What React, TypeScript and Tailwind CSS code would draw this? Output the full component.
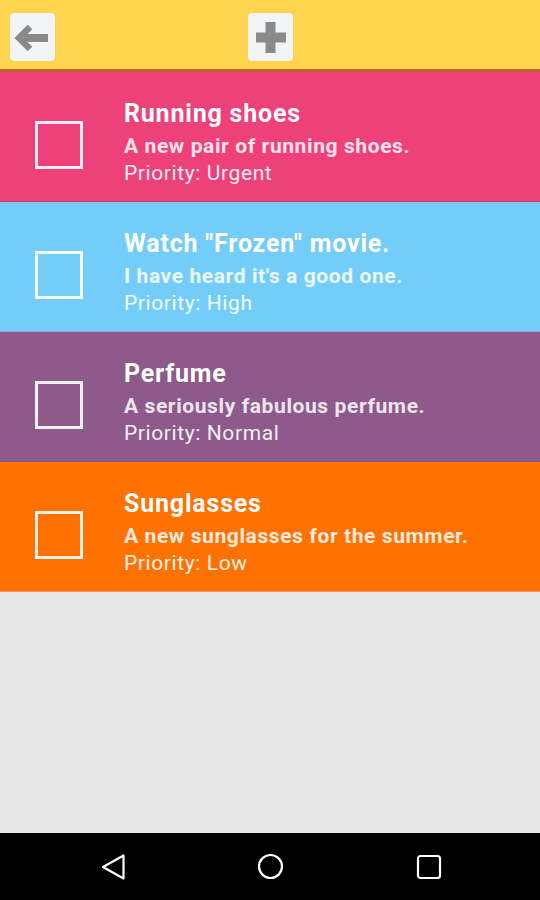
import React from 'react';

interface Task {
  id: number;
  title: string;
  description: string;
  priority: string;
  color: string;
  edge: string;
}

const tasks: Task[] = [
  {
    id: 1,
    title: 'Running shoes',
    description: 'A new pair of running shoes.',
    priority: 'Urgent',
    color: 'bg-[#ee4079]',
    edge: 'border-[#d8346a]',
  },
  {
    id: 2,
    title: 'Watch "Frozen" movie.',
    description: "I have heard it's a good one.",
    priority: 'High',
    color: 'bg-[#73cdf8]',
    edge: 'border-[#8fa6d6]',
  },
  {
    id: 3,
    title: 'Perfume',
    description: 'A seriously fabulous perfume.',
    priority: 'Normal',
    color: 'bg-[#8e5a8b]',
    edge: 'border-[#85557f]',
  },
  {
    id: 4,
    title: 'Sunglasses',
    description: 'A new sunglasses for the summer.',
    priority: 'Low',
    color: 'bg-[#ff7101]',
    edge: 'border-[#ff9460]',
  },
];

const App: React.FC = () => {
  return (
    <div className="flex flex-col w-[540px] h-[900px] bg-[#e8e8e8] font-['Roboto',sans-serif]">
      {/* toolbar */}
      <div className="h-[69px] bg-[#ffd54f] flex items-start shrink-0">
        <button className="mt-[13px] ml-[10px] w-[45px] h-[48px] rounded-[4px] bg-[#f3f4f6] flex items-center justify-center shadow-[0_0_1px_rgba(0,0,0,0.15)]">
          <svg viewBox="0 0 45 48" className="w-[45px] h-[48px]">
            <path d="M38 25H14" stroke="#8a8a8a" strokeWidth={8} fill="none" />
            <path d="M20 14L9 25l11 11" stroke="#8a8a8a" strokeWidth={6.5} strokeLinejoin="miter" fill="none" />
          </svg>
        </button>
        <button className="mt-[13px] ml-[193px] w-[45px] h-[48px] rounded-[4px] bg-[#f3f4f6] flex items-center justify-center shadow-[0_0_1px_rgba(0,0,0,0.15)]">
          <svg viewBox="0 0 45 48" className="w-[45px] h-[48px]">
            <path d="M17.5 9h10v10.5H38v10H27.5V40h-10V29.5H8v-10h9.5z" fill="#8a8a8a" />
          </svg>
        </button>
      </div>
      <div className="h-[3px] bg-[#c0642c] shrink-0" />

      {/* task list */}
      <div className="flex flex-col">
        {tasks.map((task) => (
          <div
            key={task.id}
            className={`h-[130px] flex items-start border-b ${task.color} ${task.edge}`}
          >
            <div className="mt-[49px] ml-[35px] w-[48px] h-[48px] border-[3px] border-white/90 shrink-0" />
            <div className="ml-[41px] pt-[28px] text-white">
              <div className="text-[25px] leading-[28px] font-bold tracking-[0.8px]">{task.title}</div>
              <div className="mt-[5px] text-[21px] leading-[27px] font-bold tracking-[0.6px] text-white/85">
                {task.description}
              </div>
              <div className="text-[21px] leading-[27px] tracking-[0.6px] text-white/90">
                Priority: {task.priority}
              </div>
            </div>
          </div>
        ))}
      </div>

      <div className="flex-1" />

      {/* navigation bar */}
      <div className="h-[67px] bg-black flex items-center shrink-0">
        <svg viewBox="0 0 26 28" className="ml-[100px] w-[26px] h-[28px]">
          <path d="M23.5 2.5v23L3 14z" stroke="white" strokeWidth={2.2} strokeLinejoin="round" fill="none" />
        </svg>
        <svg viewBox="0 0 27 27" className="ml-[131px] w-[27px] h-[27px]">
          <circle cx="13.5" cy="13.5" r="11.5" stroke="white" strokeWidth={2.2} fill="none" />
        </svg>
        <svg viewBox="0 0 26 26" className="ml-[132px] w-[26px] h-[26px]">
          <rect x="2" y="2" width="22" height="22" rx="2.5" stroke="white" strokeWidth={2.2} fill="none" />
        </svg>
      </div>
    </div>
  );
};

export default App;
